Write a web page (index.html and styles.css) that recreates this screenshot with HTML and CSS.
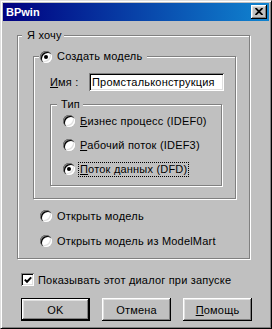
FILE: index.html
```html
<!DOCTYPE html>
<html lang="ru">
<head>
    <meta charset="UTF-8">
    <title>BPwin</title>
    <link rel="stylesheet" href="styles.css">
</head>
<body>
    <div class="window">
        <div class="titlebar">
            <span class="title">BPwin</span>
            <span class="close">
                <svg width="8" height="7" viewBox="0 0 8 7"><path d="M0.5 0 L7.5 7 M7.5 0 L0.5 7" stroke="#000" stroke-width="1.8"/></svg>
            </span>
        </div>
        <div class="content">
            <fieldset class="group group-main">
                <legend class="caption caption-main">Я хочу</legend>
                <div class="main-body">
                    <fieldset class="group group-create">
                        <legend class="caption caption-create"><span class="option"><span class="radio checked"></span>Создать модель</span></legend>
                        <div class="create-body">
                            <div class="name-row">
                                <span class="name-label"><u>И</u>мя :</span>
                                <span class="field">Промстальконструкция</span>
                            </div>
                            <fieldset class="group group-type">
                                <legend class="caption caption-type">Тип</legend>
                                <div class="type-body">
                                    <div class="option"><span class="radio"></span><span><u>Б</u>изнес процесс (IDEF0)</span></div>
                                    <div class="option"><span class="radio"></span><span><u>Р</u>абочий поток (IDEF3)</span></div>
                                    <div class="option"><span class="radio checked"></span><span class="focus"><u>П</u>оток данных (DFD)</span></div>
                                </div>
                            </fieldset>
                        </div>
                    </fieldset>
                    <div class="option outer-option"><span class="radio"></span><span>Открыть модель</span></div>
                    <div class="option outer-option"><span class="radio"></span><span>Открыть модель из ModelMart</span></div>
                </div>
            </fieldset>
            <div class="check-row">
                <span class="checkbox">
                    <svg width="8" height="8" viewBox="0 0 8 8"><path d="M0.8 3.6 L3 5.8 L7.2 1.4" stroke="#000" stroke-width="2" fill="none"/></svg>
                </span>
                <span>Показывать этот диалог при запуске</span>
            </div>
            <div class="buttons">
                <button class="btn default">OK</button>
                <button class="btn">Отмена</button>
                <button class="btn"><u>П</u>омощь</button>
            </div>
        </div>
    </div>
</body>
</html>
```

FILE: styles.css
```css
body {
    margin: 0;
    font-family: "Liberation Sans", Arial, sans-serif;
    font-size: 11px;
    letter-spacing: 0.2px;
    color: #000;
}
.window {
    width: 272px;
    height: 329px;
    box-sizing: border-box;
    background-color: #c0c0c0;
    border: 1px solid;
    border-color: #dfdfdf #000 #000 #dfdfdf;
    box-shadow: inset 1px 1px 0 #fff, inset -1px -1px 0 #808080;
    padding: 2px;
}
.titlebar {
    height: 18px;
    display: flex;
    align-items: center;
    justify-content: space-between;
    background: linear-gradient(to right, #000080, #1084d0);
    padding: 0 2px 0 3px;
}
.title {
    color: #fff;
    font-weight: bold;
    letter-spacing: 0;
}
.close {
    width: 16px;
    height: 14px;
    box-sizing: border-box;
    background-color: #c0c0c0;
    box-shadow: inset -1px -1px 0 #000, inset 1px 1px 0 #fff, inset -2px -2px 0 #808080, inset 2px 2px 0 #dfdfdf;
    display: flex;
    align-items: center;
    justify-content: center;
    padding-bottom: 1px;
}
.content {
    padding: 8px 0 0 14px;
}
.group {
    margin: 0;
    padding: 0;
    min-width: 0;
    border: 1px solid #808080;
    box-shadow: 1px 1px 0 #fff, inset 1px 1px 0 #fff;
}
.caption {
    line-height: 13px;
    background-color: #c0c0c0;
}
.group-main {
    width: 233px;
    box-sizing: border-box;
}
.caption-main {
    margin-left: 4px;
    padding: 0 2px 0 5px;
}
.main-body {
    padding: 8px 13px 10px 15px;
}
.caption-create {
    margin-left: 5px;
    padding: 0 5px 0 1px;
}
.create-body {
    padding: 10px 11px 12px 16px;
}
.name-row {
    display: flex;
    align-items: center;
    height: 18px;
}
.name-label {
    width: 39px;
}
.field {
    width: 135px;
    height: 18px;
    box-sizing: border-box;
    background-color: #fff;
    box-shadow: inset 1px 1px 0 #808080, inset -1px -1px 0 #fff, inset 2px 2px 0 #000, inset -2px -2px 0 #dfdfdf;
    padding-left: 3px;
    line-height: 18px;
}
.group-type {
    margin: 7px 2px 0 0;
}
.caption-type {
    margin-left: 6px;
    padding: 0 3px 0 4px;
}
.type-body {
    padding: 3px 0 9px 12px;
    display: flex;
    flex-direction: column;
    gap: 10px;
}
.option {
    display: flex;
    align-items: center;
    height: 14px;
}
.caption .option {
    height: 13px;
}
.radio {
    position: relative;
    width: 12px;
    height: 12px;
    flex: none;
    border-radius: 50%;
    background-color: #fff;
    box-shadow: inset 1px 1px 0 #808080, inset 2px 2px 0 #000, inset -1px -1px 0 #fff, inset -2px -2px 0 #dfdfdf;
    margin-right: 5px;
}
.radio.checked::after {
    content: "";
    position: absolute;
    left: 4px;
    top: 4px;
    width: 4px;
    height: 4px;
    border-radius: 50%;
    background-color: #000;
}
.focus {
    border: 1px dotted #000;
    padding: 0 1px;
    margin-left: -2px;
    line-height: 13px;
}
.outer-option {
    margin-left: 7px;
}
.outer-option:first-of-type {
    margin-top: 10px;
}
.outer-option + .outer-option {
    margin-top: 11px;
}
.check-row {
    display: flex;
    align-items: center;
    height: 13px;
    margin: 14px 0 0 4px;
}
.checkbox {
    width: 13px;
    height: 13px;
    box-sizing: border-box;
    background-color: #fff;
    box-shadow: inset 1px 1px 0 #808080, inset -1px -1px 0 #fff, inset 2px 2px 0 #000, inset -2px -2px 0 #dfdfdf;
    display: flex;
    align-items: center;
    justify-content: center;
    margin-right: 4px;
}
.buttons {
    display: flex;
    gap: 12px;
    margin: 12px 0 0 4px;
}
.btn {
    width: 69px;
    height: 23px;
    box-sizing: border-box;
    padding: 0;
    border: none;
    background-color: #c0c0c0;
    font-family: "Liberation Sans", Arial, sans-serif;
    font-size: 11px;
    letter-spacing: 0.2px;
    color: #000;
    box-shadow: inset -1px -1px 0 #000, inset 1px 1px 0 #fff, inset -2px -2px 0 #808080, inset 2px 2px 0 #dfdfdf;
}
.btn.default {
    border: 1px solid #000;
}
u {
    text-decoration: underline;
    text-underline-offset: 1px;
}
```
